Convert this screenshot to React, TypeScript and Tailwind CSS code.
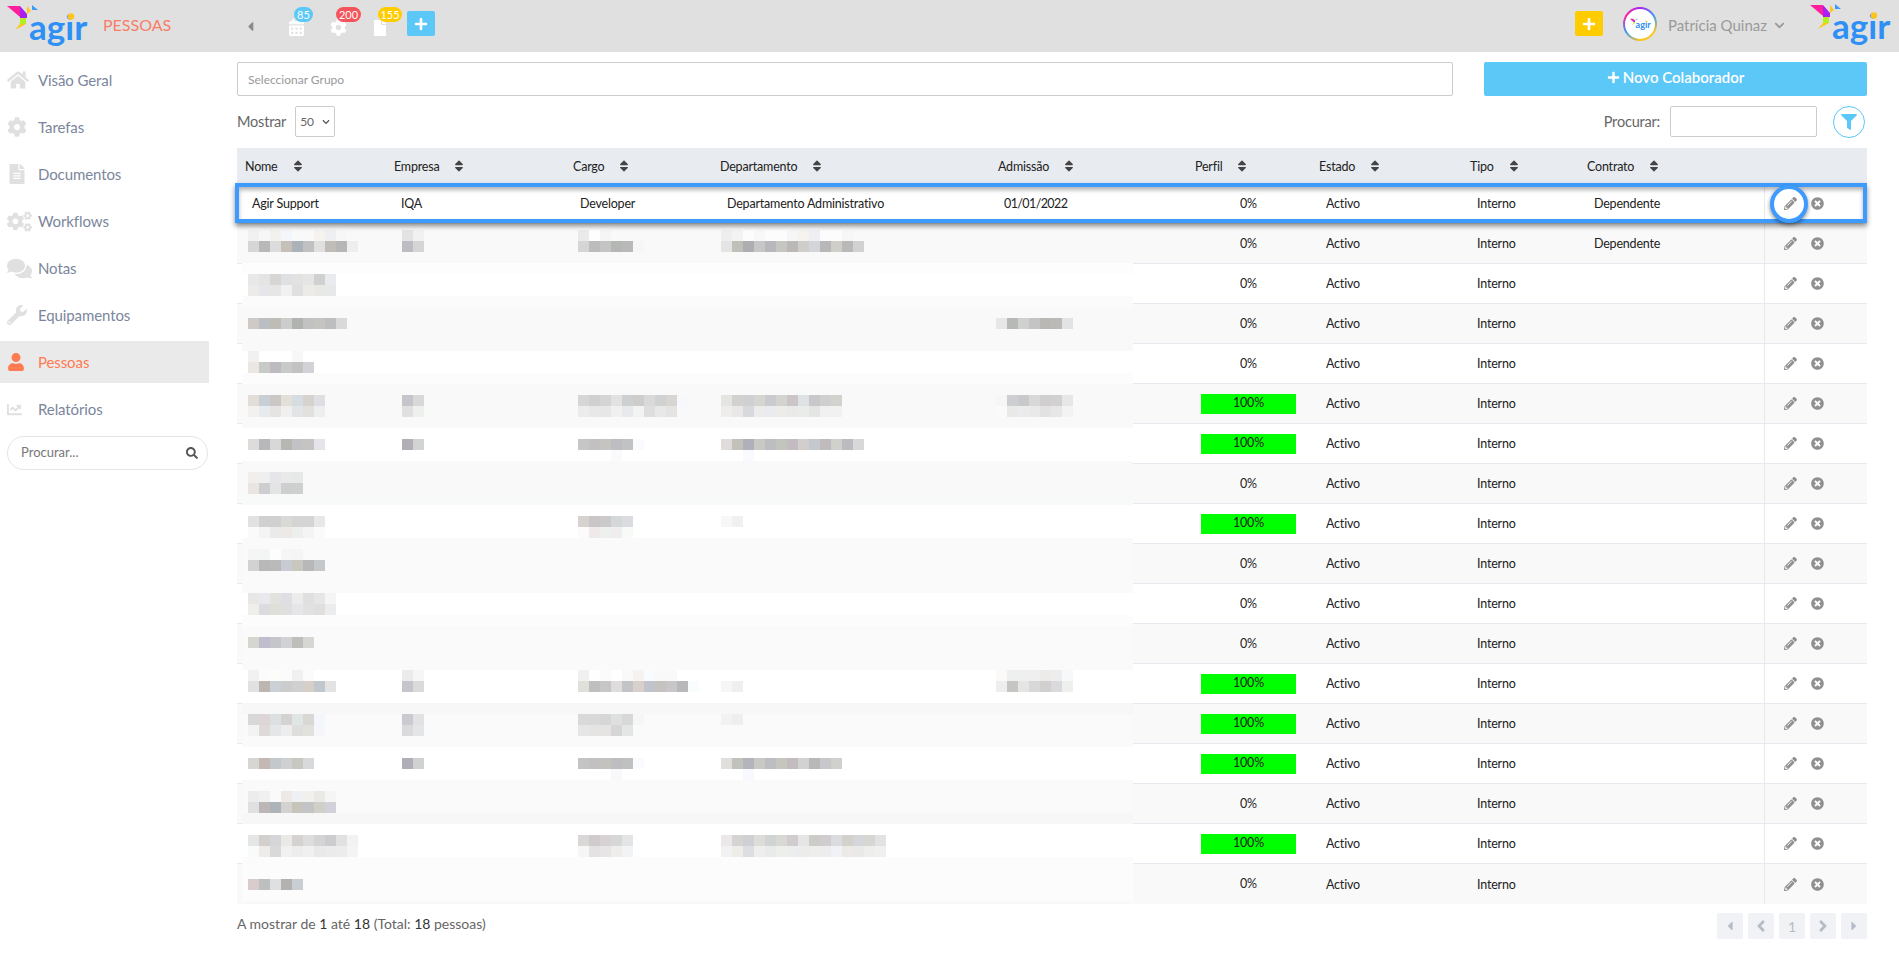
import React from "react";
import {
  FaHome, FaCog, FaFileAlt, FaCogs, FaComments, FaWrench, FaUser, FaChartLine, FaSearch,
  FaSort, FaPencilAlt, FaTimesCircle, FaFilter, FaPlus, FaCalendarAlt, FaFile, FaChevronDown,
  FaCaretLeft, FaCaretRight, FaAngleLeft, FaAngleRight,
} from "react-icons/fa";

const cols = "grid grid-cols-[149px_179px_147px_278px_197px_124px_151px_117px_185px_103px]";

function Logo({ className }: { className: string }) {
  return (
    <svg viewBox="0 0 92 50" className={className}>
      <polygon points="7,5 20,5 20,16" fill="#ff1f9c" />
      <polygon points="20,5 27,13 27,17 20,17" fill="#a81ff0" />
      <polygon points="27,13 27,5 31,10" fill="#ffc61a" />
      <polygon points="32,4 38,9 32,9" fill="#3d9bf5" />
      <polygon points="20,17 26,17 26,23 20,23" fill="#b4f01f" />
      <polygon points="15,29 20,23 26,23" fill="#ffc61a" />
      <text x="29" y="39" fontFamily="Lato, sans-serif" fontWeight="700" fontSize="35" fill="#2e90f5">agir</text>
      <circle cx="71" cy="15.5" r="3.2" fill="#ffc61a" />
    </svg>
  );
}

function TopIcon({ icon, badge, color, wide }: { icon: React.ReactNode; badge: string; color: string; wide: string }) {
  return (
    <div className="relative w-[18px] h-[20px] flex items-center justify-center text-white">
      {icon}
      <span className={`absolute top-[-11px] left-[7px] h-[15px] rounded-full text-white text-[11px] leading-[15px] text-center ${color} ${wide}`}>{badge}</span>
    </div>
  );
}

const navItems = [
  { label: "Visão Geral", icon: <FaHome className="text-[22px]" /> },
  { label: "Tarefas", icon: <FaCog className="text-[20px]" /> },
  { label: "Documentos", icon: <FaFileAlt className="text-[20px]" /> },
  { label: "Workflows", icon: <FaCogs className="text-[25px]" /> },
  { label: "Notas", icon: <FaComments className="text-[25px]" /> },
  { label: "Equipamentos", icon: <FaWrench className="text-[20px]" /> },
  { label: "Pessoas", icon: <FaUser className="text-[18px]" />, active: true },
  { label: "Relatórios", icon: <FaChartLine className="text-[15px]" /> },
];

const headers = ["Nome", "Empresa", "Cargo", "Departamento", "Admissão", "Perfil", "Estado", "Tipo", "Contrato"];
const fullProfile = [6, 7, 9, 13, 14, 15, 17];

const bands: [number, string][] = [
  [33, "bg-[#f9f9f9]"], [11, "bg-[#fdfdfd]"], [22, "bg-white"], [11, "bg-[#fbfbfb]"], [44, "bg-[#f9f9f9]"],
  [22, "bg-white"], [11, "bg-[#fcfcfc]"], [44, "bg-[#f9f9f9]"], [33, "bg-white"], [33, "bg-[#f9f9f9]"], [11, "bg-[#f8faf9]"],
  [33, "bg-white"], [55, "bg-[#fafafa]"], [22, "bg-white"], [11, "bg-[#fcfcfc]"], [44, "bg-[#fafafa]"],
  [33, "bg-white"], [11, "bg-[#f7f7f7]"], [33, "bg-[#fafafa]"], [33, "bg-white"], [33, "bg-[#fafafa]"], [11, "bg-[#f7f7f7]"],
  [33, "bg-white"], [44, "bg-[#fcfcfc]"],
];

const tiles: [number, number, string][] = [
  [0, 0, "f1 f7 f3f1ee f3f6fa -- -- f6f3ee edeff2 f7"],
  [0, 1, "d6 b8 dc c6c0b8 aab4b8 c0c1c3 e0 c0bcb8 b6 eceef0"],
  [14, 0, "e3 f1"], [14, 1, "bcbcc2 d5"],
  [30, 0, "ea fe f5"], [30, 1, "d5 bdbbbb c4 b5b7b5 b9 f6"],
  [43, 0, "ee f1f4f3 fc f8 fc fc f6 f6f3ee edeff2 fc fc f7"],
  [43, 1, "e4 c0bfb8 adadb2 c6 b6b8bc c6c6c0 bdb8b8 d0ceca d2d6da b8 cfcec9 b9 d2"],
  [0, 4, "e8 e4 d8d6d4 dfe0e3 e2 e5 d0 e9ebee"],
  [0, 5, "ecebe9 e6e6ea e6 f1 e0 ecebe8 e8e8e5 e7e8ea"],
  [0, 8, "cfcac6 b9bfc2 bebcb4 cc b0b4b0 c2 c5c4c0 bcbec0 d9"],
  [68, 8, "e7 b7b9b7 d0 c4 bab8b4 bcbab8 e2e3e5"],
  [0, 11, "f1 -- -- -- f7"],
  [0, 12, "ebe7e3 c8cac8 bfbac0 c8cac9 c2 d2d3d7"],
  [0, 15, "e2ddd6 c8d0d6 cac7c4 e3dfd9 d5dce2 d6d3cf dedfe2"],
  [0, 16, "f3f1ef e8ebee e6e4e2 f0 e2e4e6 e2e1de eceef0"],
  [14, 15, "c6c5cb d8"], [14, 16, "e0 eef0ee"],
  [30, 15, "d6 d0 d5 e2 cdd0d0 cfcccc d9 cfd2d0 d8d5d2 f6f8fb"],
  [30, 16, "ec e8 e7 f0 e8e9ec f3 de e8 e5e4e2 f8f9fb"],
  [43, 15, "e4e4e2 d2d2ce cfd0d2 d5d6d2 cacbcf d3d3cf ccc5c8 dfe2e4 c8c8ca cfcfd0 d2d2ce"],
  [43, 16, "efedeb e9e8e6 d8d9dc ec e9ebee edece9 ebeaea ebebea e4e6e6 f1 f1"],
  [68, 15, "f6 cdced2 c9c9cb d8 d1cfcd d1 e6e7e9"],
  [68, 16, "fa e9e9e7 eaebed e9 e2 e7 f3"],
  [0, 19, "dedcda b8b8ba d8 b8b6b2 c0c2c4 c6c4c2 e4e4ea"],
  [14, 19, "b2aeb6 d2d4d4"],
  [30, 19, "c6 c2c0c2 c4c4c0 bebec2 c2c2c4 fafbfe"], [33, 20, "f9fafc"],
  [43, 19, "e0dcdc c2c2ba b0b0b8 c8c8c4 bcbec2 c4c4be c2bcc0 d2cece c4c9d0 c0bcbe d0d0cc bcbcc0 d8"],
  [45, 20, "f8fafe"],
  [0, 22, "f1eeec ef e6e6ea e9 e6e9e8"],
  [0, 23, "e9e5e0 ccced0 e4 ccced0 ced0ce"],
  [0, 26, "e2 d0 d0 dad9d6 d4 d4 e8"],
  [0, 27, "fa f4 ea ece9e6 ecefec f4 fa"],
  [30, 26, "d5d2d0 c9c5c8 ccc9cb d4d8d8 dadcdf"],
  [30, 27, "fb efe9ea eef0ee efeded f8faf8"],
  [43, 26, "f7 f0"],
  [0, 29, "f5 f3f5f5 fd f6 f5"],
  [0, 30, "d2 b8 ba c8ccd2 c8c8c0 b8 c2c8cc"],
  [0, 33, "e9e7e5 e9e9ed e2e2de dfdfe3 ec e0 e6 f5"],
  [0, 34, "efeee9 dcdce0 dfdfda e0dedf e4e6e8 e1 e0dfdd eaecee"],
  [0, 37, "d6d6d0 c0bdcc c6c6ca d0d2d4 bebeba d6d6d2"],
  [0, 40, "f1 fb fcfcf8 fb f0 fb"],
  [0, 41, "e3e1df bdb5af cad0d6 cc d0 d5cfc8 c0c8ce e3"],
  [14, 40, "eb f6"], [14, 41, "c6c4cc da"],
  [30, 40, "f0 fe fb -- f9 f6f3ee f8fcfe f9 f9"],
  [30, 41, "dfe0da bfbfc2 c6 dfdcdc c2c4c8 d8d0ca c2c4cc c6c2c0 c8c6c8 b8b8ba f9fdfe"],
  [43, 41, "f6 ef"],
  [68, 40, "fbfaf8 edf0ee ef ef ecebe9 eeeded f6f8fa"],
  [68, 41, "ee c5c5c3 e4e6e4 d8 d2cfd0 dadade eef0ee"],
  [0, 44, "d9d8d6 dcd6d6 dce0e3 d5d2d2 e0e5e5 dad8d4 f3f6fa"],
  [0, 45, "f3 dedada e4e6e8 ed dededc e1e1de f4f6f9"],
  [14, 44, "cacad0 e2e2e4"], [14, 45, "dadadc e4e5e6"],
  [30, 44, "d9 d9 d6 dde0de d6d8da f6"], [30, 45, "e6 e4 e6e4e2 d6 e4e6e6"],
  [43, 44, "f2 ee"],
  [0, 48, "d8d6d2 c4b8b2 c2c8cc cfd0d2 c8c8c0 d8d9db"],
  [14, 48, "b0aeb6 d0d2d2"],
  [30, 48, "c4 c2c0c0 c4c2be bebec0 c0 fafbfe"], [33, 49, "f8f8fa"],
  [43, 48, "e2dede c2c2bc b4b4bc c8c8c4 bcbec2 c6c6be c2bcbe d2 b8 c8c8cc d0d0cc"],
  [45, 49, "f8f9fe"],
  [0, 51, "ec f0 fa ece9e7 eef0f4 f1f0ec ebe9e6 f5"],
  [0, 52, "e0 bcb6b6 adb4b9 d2d2d0 c8c4bc c2c4c6 d0d0c8 d2d0d8"],
  [0, 55, "e4e7e6 d2cfcc d4d6da e9e9e6 d6d2d2 dedcdc d4d4d6 ccccce dfe2e0 f2"],
  [0, 56, "f8fbfa eeeceb d9 f1 ed f0 e9 ecebec ec f4"],
  [30, 55, "d9d8d6 d0ccce d8d2d2 d6d8d8 e3e4e6"],
  [30, 56, "f6 e4e2e2 e6 efedeb f2f3f5"],
  [43, 55, "ece8ea d6d4d2 d0d0d4 dcdcd8 d0d4d2 d8d8d4 d0ccd0 e6 ccccc8 d0ccd0 dadce0 d4d0cc d4d6da d6d6d2 e0e2e4"],
  [43, 56, "f2 efede8 dcdee2 ee e8ebea eeeeea eceded ebeceb eeeeec ed f0f2f5 ece9e6 e9e9e8 eeeeec eff1f1"],
  [0, 59, "d8cccc bcc0be dfe0e2 b4b2ae c8ced2"],
];

function Mosaic() {
  return (
    <div className="absolute left-[5px] top-[82px] w-[891px] flex flex-col">
      {bands.map(([h, c], i) => (
        <div key={i} className={c} style={{ height: h }} />
      ))}
      <div className="absolute left-[6px] top-0 grid grid-cols-[repeat(80,11px)] grid-rows-[repeat(61,11px)]">
        {tiles.flatMap(([k, m, s]) =>
          s.split(" ").map((c, j) =>
            c === "--" ? null : (
              <div
                key={`${k}-${m}-${j}`}
                style={{
                  gridColumnStart: k + j + 1,
                  gridRowStart: m + 1,
                  background: c.length === 2 ? `#${c}${c}${c}` : `#${c}`,
                }}
              />
            )
          )
        )}
      </div>
    </div>
  );
}

function Row({ n }: { n: number }) {
  const first = n === 1;
  const contract = n <= 2;
  const full = fullProfile.includes(n);
  const stripe = n % 2 === 0 ? "bg-[#f9f9f9]" : "bg-white";
  const line = n === 18 ? "" : "border-b border-[#e8e9ee]";
  return (
    <div className={`${cols} h-[40px] items-center text-[12.5px] tracking-[-0.2px] text-[#222] ${line} ${stripe}`}>
      <div className="pl-[15px] pt-[2px]">{first ? "Agir Support" : ""}</div>
      <div className="pl-[15px] pt-[2px]">{first ? "IQA" : ""}</div>
      <div className="pl-[15px] pt-[2px]">{first ? "Developer" : ""}</div>
      <div className="pl-[15px] pt-[2px]">{first ? "Departamento Administrativo" : ""}</div>
      <div className="pl-[14px] pt-[2px] tracking-[-0.6px]">{first ? "01/01/2022" : ""}</div>
      <div className="pl-[14px]">
        {full ? (
          <div className="w-[95px] h-[20px] bg-[#00ff00] text-center leading-[17px]">100%</div>
        ) : (
          <div className="w-[95px] text-center pt-[1px]">0%</div>
        )}
      </div>
      <div className="pl-[15px] pt-[2px]">Activo</div>
      <div className="pl-[15px] pt-[2px]">Interno</div>
      <div className="pl-[15px] pt-[2px]">{contract ? "Dependente" : ""}</div>
      <div className="h-full flex items-center border-l border-[#e8e9ee] pl-[19px] gap-[14px] text-[#909090]">
        <FaPencilAlt className="text-[13px] relative z-30" />
        <FaTimesCircle className="text-[13px] relative z-30" />
      </div>
    </div>
  );
}

function PageBtn({ children }: { children: React.ReactNode }) {
  return (
    <div className="w-[26px] h-[26px] bg-[#f0f2f6] rounded-[2px] flex items-center justify-center text-[#b5bcc8] text-[14px]">
      {children}
    </div>
  );
}

export default function App() {
  return (
    <div className="h-screen w-full overflow-hidden bg-white flex flex-col font-['Lato',sans-serif]">
      <header className="h-[52px] shrink-0 bg-[#e0e0e0] flex items-center">
        <Logo className="w-[92px] h-[50px] shrink-0" />
        <span className="ml-[11px] -mt-[2px] text-[16px] text-[#f77d66] w-[137px]">PESSOAS</span>
        <FaCaretLeft className="text-[#8a8a8a] text-[15px] ml-[3px]" />
        <div className="ml-[29px] mt-[3px] flex items-center gap-[24px]">
          <TopIcon icon={<FaCalendarAlt className="text-[17px]" />} badge="85" color="bg-[#5bc8f8]" wide="w-[19px]" />
          <TopIcon icon={<FaCog className="text-[17px]" />} badge="200" color="bg-[#f5545a]" wide="w-[25px]" />
          <TopIcon icon={<FaFile className="text-[16px]" />} badge="155" color="bg-[#ffcc00]" wide="w-[24px]" />
        </div>
        <div className="ml-[18px] -mt-[5px] w-[28px] h-[25px] bg-[#5bc8f8] rounded-[2px] flex items-center justify-center text-white">
          <FaPlus className="text-[14px]" />
        </div>
        <div className="flex-1" />
        <div className="-mt-[5px] w-[28px] h-[25px] bg-[#ffcc00] rounded-[2px] flex items-center justify-center text-white">
          <FaPlus className="text-[14px]" />
        </div>
        <div className="ml-[20px] -mt-[4px] w-[34px] h-[34px] rounded-full p-[2px] bg-[conic-gradient(#a81ff0,#3d9bf5,#ffc61a,#ffc61a,#3d9bf5,#ff1f9c,#a81ff0)]">
          <div className="w-full h-full rounded-full bg-white flex items-center justify-center">
            <Logo className="w-[24px] h-[14px]" />
          </div>
        </div>
        <span className="ml-[11px] -mt-[2px] text-[15px] text-[#9a9a9a]">Patrícia Quinaz</span>
        <FaChevronDown className="ml-[7px] -mt-[2px] text-[#9a9a9a] text-[11px]" />
        <Logo className="ml-[18px] mr-[4px] w-[92px] h-[50px] shrink-0 -mt-[2px]" />
      </header>

      <div className="flex-1 flex min-h-0">
        <aside className="w-[209px] shrink-0 pt-[7px]">
          {navItems.map((it) => (
            <div
              key={it.label}
              className={`h-[42px] mb-[5px] flex items-center text-[15px] tracking-[-0.1px] ${it.active ? "bg-[#eaeaea] text-[#ff7b52]" : "text-[#7b869c]"}`}
            >
              <span className={`w-[38px] pl-[7px] flex items-center shrink-0 ${it.active ? "text-[#ff7b52]" : "text-[#e0e0e0]"}`}>{it.icon}</span>
              {it.label}
            </div>
          ))}
          <div className="ml-[7px] mt-[6px] w-[201px] h-[34px] rounded-full border border-[#e5e5e5] flex items-center justify-between pl-[13px] pr-[9px]">
            <span className="text-[13px] text-[#777]">Procurar...</span>
            <FaSearch className="text-[12px] text-[#555]" />
          </div>
        </aside>

        <main className="flex-1 pl-[28px] pr-[32px] pt-[10px] min-w-0">
          <div className="flex gap-[31px]">
            <div className="w-[1216px] h-[34px] border border-[#ccc] rounded-[2px] flex items-center pl-[10px] pt-[1px] text-[12px] text-[#999]">
              Seleccionar Grupo
            </div>
            <div className="flex-1 h-[34px] bg-[#5bc8f8] rounded-[2px] flex items-center justify-center gap-[3px] text-white text-[15px] font-semibold pb-[3px]">
              <FaPlus className="text-[13px]" />
              Novo Colaborador
            </div>
          </div>

          <div className="mt-[10px] h-[31px] flex items-center text-[14.5px] tracking-[-0.2px] text-[#666]">
            <span>Mostrar</span>
            <div className="ml-[9px] w-[40px] h-[31px] border border-[#ccc] rounded-[2px] flex items-center justify-between px-[4px] text-[12px]">
              50
              <FaChevronDown className="text-[8px] text-[#555]" />
            </div>
            <div className="flex-1" />
            <span>Procurar:</span>
            <div className="ml-[10px] w-[147px] h-[31px] border border-[#ccc] rounded-[2px]" />
            <div className="ml-[16px] mr-[2px] w-[32px] h-[32px] rounded-full border border-[#5bc8f8] flex items-center justify-center text-[#5bc8f8]">
              <FaFilter className="text-[16px]" />
            </div>
          </div>

          <div className="relative mt-[11px]">
            <div className={`${cols} h-[36px] items-center bg-[#e8ebf0] text-[12.5px] tracking-[-0.2px] text-[#222]`}>
              {headers.map((h) => (
                <div key={h} className="pl-[8px] flex items-center gap-[13px]">
                  <span className="pt-[2px]">{h}</span>
                  <FaSort className="text-[14px] text-[#444]" />
                </div>
              ))}
              <div />
            </div>
            {Array.from({ length: 18 }, (_, i) => (
              <Row key={i} n={i + 1} />
            ))}
            <Mosaic />
            <div className="absolute left-[-2px] top-[35px] w-[1632px] h-[40px] border-[4px] border-[#3d9bff] shadow-[0_3px_5px_rgba(0,0,0,0.45),inset_0_3px_4px_rgba(0,0,0,0.3)] z-10" />
            <div className="absolute left-[1533px] top-[37px] w-[38px] h-[38px] rounded-full border-[4px] border-[#3d9bff] bg-white shadow-[0_2px_4px_rgba(0,0,0,0.45)] z-20" />
          </div>

          <div className="mt-[9px] flex items-start justify-between">
            <span className="text-[14px] leading-[22px] text-[#666]">
              A mostrar de <span className="text-[#333]">1</span> até <span className="text-[#333]">18</span> (Total: <span className="text-[#333]">18</span> pessoas)
            </span>
            <div className="flex gap-[5px]">
              <PageBtn><FaCaretLeft /></PageBtn>
              <PageBtn><FaAngleLeft className="text-[18px]" /></PageBtn>
              <PageBtn>1</PageBtn>
              <PageBtn><FaAngleRight className="text-[18px]" /></PageBtn>
              <PageBtn><FaCaretRight /></PageBtn>
            </div>
          </div>
        </main>
      </div>
    </div>
  );
}
